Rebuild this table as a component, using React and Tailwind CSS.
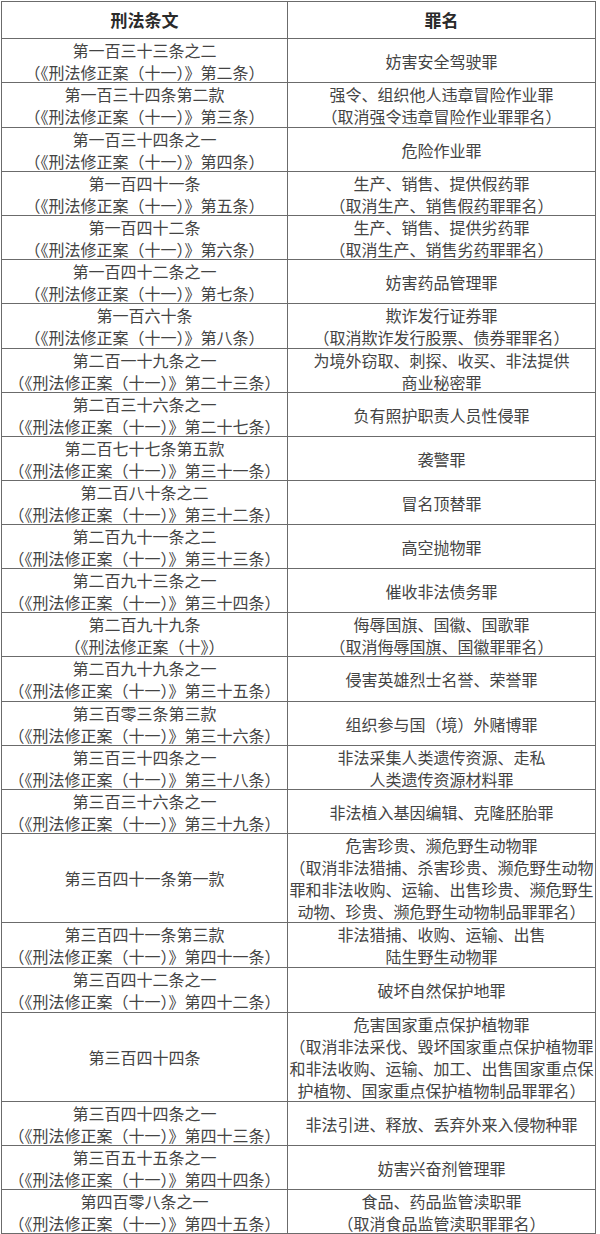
import React from 'react';

const rows = [
  { h: 'h-[44px]', law: ['第一百三十三条之二', '（《刑法修正案（十一）》第二条）'], crime: ['妨害安全驾驶罪'] },
  { h: 'h-[45px]', law: ['第一百三十四条第二款', '（《刑法修正案（十一）》第三条）'], crime: ['强令、组织他人违章冒险作业罪', '（取消强令违章冒险作业罪罪名）'] },
  { h: 'h-[44px]', law: ['第一百三十四条之一', '（《刑法修正案（十一）》第四条）'], crime: ['危险作业罪'] },
  { h: 'h-[44px]', law: ['第一百四十一条', '（《刑法修正案（十一）》第五条）'], crime: ['生产、销售、提供假药罪', '（取消生产、销售假药罪罪名）'] },
  { h: 'h-[44px]', law: ['第一百四十二条', '（《刑法修正案（十一）》第六条）'], crime: ['生产、销售、提供劣药罪', '（取消生产、销售劣药罪罪名）'] },
  { h: 'h-[44px]', law: ['第一百四十二条之一', '（《刑法修正案（十一）》第七条）'], crime: ['妨害药品管理罪'] },
  { h: 'h-[45px]', law: ['第一百六十条', '（《刑法修正案（十一）》第八条）'], crime: ['欺诈发行证券罪', '（取消欺诈发行股票、债券罪罪名）'] },
  { h: 'h-[44px]', law: ['第二百一十九条之一', '（《刑法修正案（十一）》第二十三条）'], crime: ['为境外窃取、刺探、收买、非法提供', '商业秘密罪'] },
  { h: 'h-[44px]', law: ['第二百三十六条之一', '（《刑法修正案（十一）》第二十七条）'], crime: ['负有照护职责人员性侵罪'] },
  { h: 'h-[44px]', law: ['第二百七十七条第五款', '（《刑法修正案（十一）》第三十一条）'], crime: ['袭警罪'] },
  { h: 'h-[44px]', law: ['第二百八十条之二', '（《刑法修正案（十一）》第三十二条）'], crime: ['冒名顶替罪'] },
  { h: 'h-[44px]', law: ['第二百九十一条之二', '（《刑法修正案（十一）》第三十三条）'], crime: ['高空抛物罪'] },
  { h: 'h-[44px]', law: ['第二百九十三条之一', '（《刑法修正案（十一）》第三十四条）'], crime: ['催收非法债务罪'] },
  { h: 'h-[44px]', law: ['第二百九十九条', '（《刑法修正案（十》）'], crime: ['侮辱国旗、国徽、国歌罪', '（取消侮辱国旗、国徽罪罪名）'] },
  { h: 'h-[45px]', law: ['第二百九十九条之一', '（《刑法修正案（十一）》第三十五条）'], crime: ['侵害英雄烈士名誉、荣誉罪'] },
  { h: 'h-[44px]', law: ['第三百零三条第三款', '（《刑法修正案（十一）》第三十六条）'], crime: ['组织参与国（境）外赌博罪'] },
  { h: 'h-[44px]', law: ['第三百三十四条之一', '（《刑法修正案（十一）》第三十八条）'], crime: ['非法采集人类遗传资源、走私', '人类遗传资源材料罪'] },
  { h: 'h-[44px]', law: ['第三百三十六条之一', '（《刑法修正案（十一）》第三十九条）'], crime: ['非法植入基因编辑、克隆胚胎罪'] },
  {
    h: 'h-[89px]',
    law: ['第三百四十一条第一款'],
    crime: ['危害珍贵、濒危野生动物罪', '（取消非法猎捕、杀害珍贵、濒危野生动物', '罪和非法收购、运输、出售珍贵、濒危野生', '动物、珍贵、濒危野生动物制品罪罪名）'],
  },
  { h: 'h-[45px]', law: ['第三百四十一条第三款', '（《刑法修正案（十一）》第四十一条）'], crime: ['非法猎捕、收购、运输、出售', '陆生野生动物罪'] },
  { h: 'h-[45px]', law: ['第三百四十二条之一', '（《刑法修正案（十一）》第四十二条）'], crime: ['破坏自然保护地罪'] },
  {
    h: 'h-[89px]',
    law: ['第三百四十四条'],
    crime: ['危害国家重点保护植物罪', '（取消非法采伐、毁坏国家重点保护植物罪', '和非法收购、运输、加工、出售国家重点保', '护植物、国家重点保护植物制品罪罪名）'],
  },
  { h: 'h-[44px]', law: ['第三百四十四条之一', '（《刑法修正案（十一）》第四十三条）'], crime: ['非法引进、释放、丢弃外来入侵物种罪'] },
  { h: 'h-[44px]', law: ['第三百五十五条之一', '（《刑法修正案（十一）》第四十四条）'], crime: ['妨害兴奋剂管理罪'] },
  { h: 'h-[44px]', law: ['第四百零八条之一', '（《刑法修正案（十一）》第四十五条）'], crime: ['食品、药品监管渎职罪', '（取消食品监管渎职罪罪名）'] },
];

const Cell = ({ lines, left }) => (
  <div
    className={`flex flex-col items-center justify-center ${left ? 'border-r border-[#6b6b6b]' : ''}`}
  >
    {lines.map((t, i) => (
      <span key={i} className="whitespace-nowrap">
        {t}
      </span>
    ))}
  </div>
);

export default function App() {
  return (
    <div className="min-h-[1234px] bg-white pt-[1px] pl-[1px] font-['Noto_Sans_CJK_SC',sans-serif] text-[16px] leading-[22px] text-[#444]">
      <div className="w-[595px] border-t border-l border-r border-[#6b6b6b]">
        {/* header */}
        <div className="grid h-[37px] grid-cols-[286px_1fr] border-b border-[#6b6b6b] text-[17px] font-bold text-[#2a2a2a]">
          <div className="flex items-center justify-center border-r border-[#6b6b6b]">刑法条文</div>
          <div className="flex items-center justify-center">罪名</div>
        </div>

        {rows.map((r, i) => (
          <div key={i} className={`grid grid-cols-[286px_1fr] border-b border-[#6b6b6b] ${r.h}`}>
            <Cell lines={r.law} left />
            <Cell lines={r.crime} />
          </div>
        ))}
      </div>
    </div>
  );
}
